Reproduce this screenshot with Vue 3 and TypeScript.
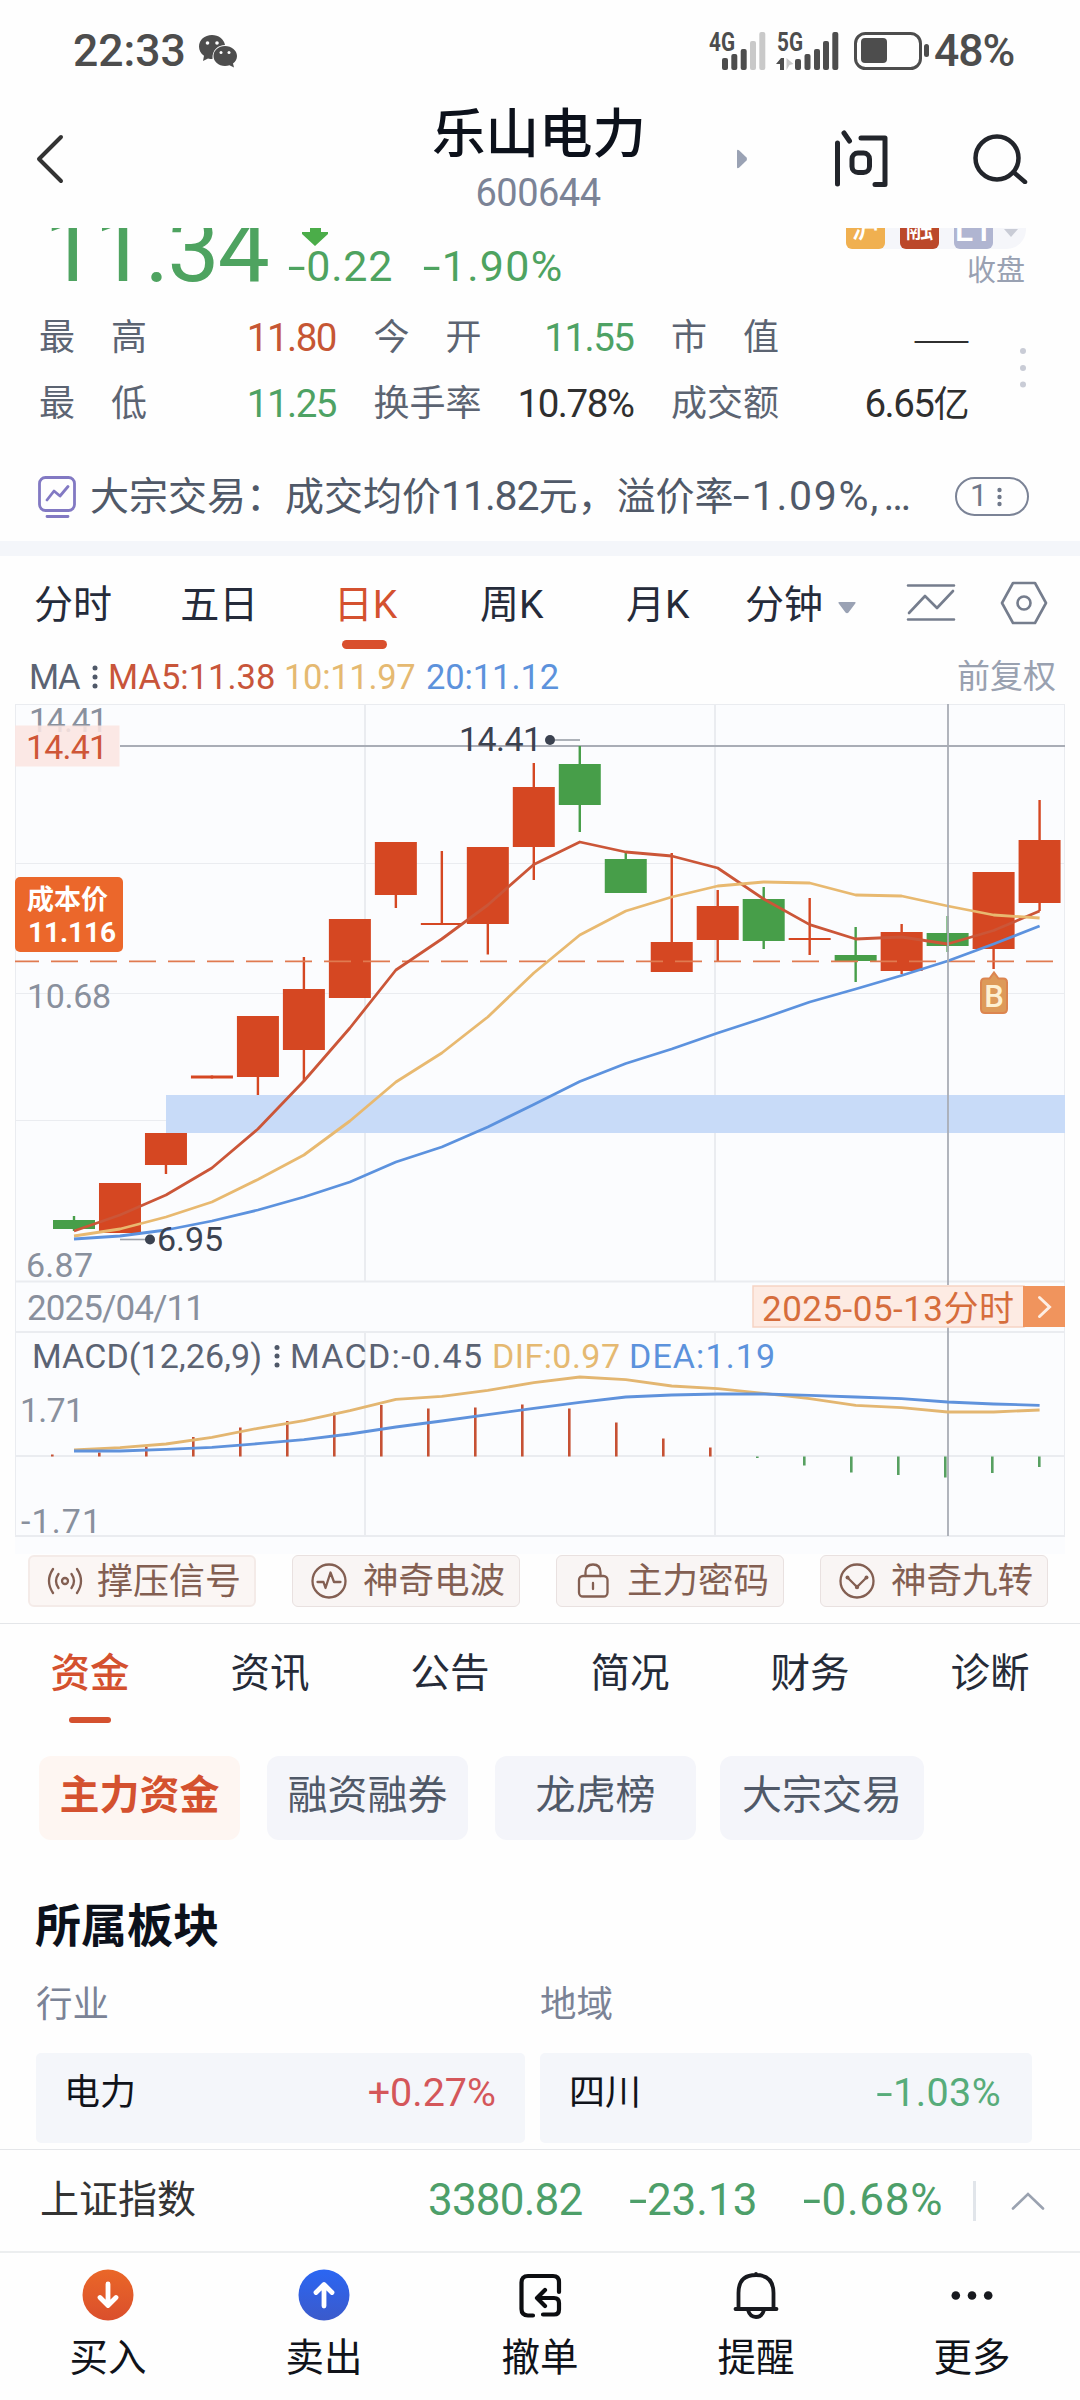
<script setup lang="ts">
interface Candle {
  up: boolean
  top: number
  bottom: number
  high: number
  low: number
}

const STEP = 45.98
const FIRST_X = 74

// [rising, body top, body bottom, high, low] in chart pixels
const rows: [boolean, number, number, number, number][] = [
  [false, 520, 529, 516, 531],
  [true, 483, 533, 483, 533],
  [true, 433, 465, 433, 474],
  [true, 375.5, 378.5, 375.5, 378.5],
  [true, 316, 377, 316, 395],
  [true, 289, 350, 257, 381.5],
  [true, 219, 298, 219, 298],
  [true, 142, 195, 142, 208],
  [true, 223, 225, 151, 224],
  [true, 147, 224, 147, 254.5],
  [true, 87, 147, 63, 180],
  [false, 64, 105, 46, 132],
  [false, 159, 193, 152, 193],
  [true, 242, 272, 153, 272],
  [true, 206, 240, 190, 261],
  [false, 199, 241, 187, 249],
  [true, 238, 240, 198, 255],
  [false, 255, 261, 227, 282],
  [true, 232, 271, 224, 274],
  [false, 233, 246, 216, 252],
  [true, 172, 249, 172, 269],
  [true, 140, 203, 100, 211],
]
const candles: Candle[] = rows.map(([up, top, bottom, high, low]) => ({ up, top, bottom, high, low }))

const ma5 = [531, 515, 495, 468, 429, 381, 328, 270, 239, 205, 164.5, 142, 152, 156, 168, 199, 224.6, 239, 237, 244, 230.5, 211]
const ma10 = [536, 529, 517, 502, 479.5, 455, 421, 382, 353, 317, 273, 235, 211, 197, 186, 182, 183, 195, 196, 206, 215, 218]
const ma20 = [539, 536, 530, 521, 510, 497, 482, 462, 447, 427, 404.5, 381.5, 363.5, 349, 333, 318, 302, 289, 275.5, 261, 244, 226]

const histogram = [2, 4, 9.5, 19.5, 29, 35.5, 44, 51.5, 48, 49, 52, 48, 34, 18, 9, -1.5, -9, -16, -18.5, -21, -16.5, -10.5]
const dif = [750, 747.7, 744, 737.3, 728.3, 720.7, 710.7, 699.3, 696.3, 690.3, 682.7, 677, 679.7, 686, 688.7, 693.3, 698.7, 705.3, 707.7, 712, 712, 710]
const dea = [751, 751, 749.3, 747.3, 743.7, 739.7, 734, 727, 721, 714.7, 708.3, 702.3, 697, 695, 694, 694, 695.3, 697, 698.7, 702, 704, 705.3]

const xAt = (i: number): number => FIRST_X + STEP * i
const line = (ys: number[]): string => ys.map((y, i) => `${xAt(i).toFixed(1)},${y}`).join(' ')

const periods = ['分时', '五日', '日K', '周K', '月K']
const sections = ['资金', '资讯', '公告', '简况', '财务', '诊断']
const chips = ['主力资金', '融资融券', '龙虎榜', '大宗交易']
</script>

<template>
  <div class="screen">
    <div class="status">
      <span class="clock">22:33</span>
      <svg class="wechat" width="40" height="34" viewBox="0 0 40 34">
        <path fill="#4d4d4d" d="M14 1C6.500 1 1 6 1 12.500c0 4 1.800 7 5 9.300L5 27l5-2.500c1.500.5 3 .5 4.500.5C14 16 20 11 27 11 26 5 20.500 1 14 1z" />
        <path fill="#4d4d4d" d="M27 12c-6.500 0-11.500 4.500-11.500 10S20.500 32 27 32c1.600 0 3-.3 4.500-.8L36 33.500l-1-4c2.500-2 4-4.500 4-7.500C39 16.500 33.500 12 27 12z" />
        <g fill="#fff"><circle cx="9.500" cy="9" r="1.800" /><circle cx="19" cy="9" r="1.800" /><circle cx="23" cy="18.500" r="1.500" /><circle cx="31" cy="18.500" r="1.500" /></g>
      </svg>
      <svg class="signals" width="222" height="52" viewBox="0 -6 222 52">
        <g class="net"><text x="0" y="19.500" textLength="26" lengthAdjust="spacingAndGlyphs">4G</text><text x="68" y="19.500" textLength="26" lengthAdjust="spacingAndGlyphs">5G</text></g>
        <g fill="#4d4d4d">
          <rect x="13" y="27" width="6" height="12" rx="2" /><rect x="22.300" y="23" width="6" height="16" rx="2" /><rect x="31.700" y="18" width="6" height="21" rx="2" />
          <rect x="86" y="28" width="6" height="11" rx="2" /><rect x="95.500" y="23" width="6" height="16" rx="2" /><rect x="105" y="18" width="6" height="21" rx="2" /><rect x="114" y="10" width="6" height="29" rx="2" /><rect x="123.300" y="1" width="6" height="38" rx="2" />
          <path d="M67 33l5-6h3v12h-4v-6z" />
          <rect x="152" y="7" width="26" height="25" rx="4" /><rect x="215" y="13" width="5" height="13" rx="2.500" />
        </g>
        <g fill="#c9c9c9"><rect x="41" y="10" width="6" height="29" rx="2" /><rect x="50.300" y="1" width="6" height="38" rx="2" /><path d="M77.500 27l7 6-4 1-3 5z" /></g>
        <rect x="146.500" y="2.500" width="65" height="35" rx="10" fill="none" stroke="#4d4d4d" stroke-width="3" />
      </svg>
      <span class="battery">48%</span>
    </div>

    <header class="header">
      <svg class="back" width="30" height="50" viewBox="0 0 30 50"><path d="M26 3L4 25l22 22" fill="none" stroke="#333" stroke-width="4" stroke-linecap="round" stroke-linejoin="round" /></svg>
      <div class="titles">
        <div class="name">乐山电力</div>
        <div class="code">600644</div>
      </div>
      <svg class="next" width="12" height="20" viewBox="0 0 12 20"><path d="M1 2q0-2 2-.8l7.500 7.400q1 1.400 0 2.800L3 18.800Q1 20 1 18z" fill="#9aa2b4" /></svg>
      <svg class="ask" width="56" height="58" viewBox="0 0 56 58" fill="none" stroke="#22252b" stroke-width="5" stroke-linecap="round" stroke-linejoin="round">
        <path d="M4.500 14v41M11 4l5.500 8M28 9h24v46.500H42" /><rect x="19" y="24" width="17.500" height="19.500" rx="6" />
      </svg>
      <svg class="search" width="56" height="52" viewBox="0 0 56 52" fill="none" stroke="#22252b" stroke-width="4.500" stroke-linecap="round"><circle cx="25" cy="26" r="21.500" /><path d="M42 40.500l11 9.500" /></svg>
    </header>

    <section class="price">
      <div class="last">11.34</div>
      <div class="change">
        <svg class="drop" width="26" height="26" viewBox="0 0 26 26"><path d="M8 0h11v12h7v2L13 26 0 14v-2h8z" fill="#4bad49" /></svg>
        <div class="delta"><span class="d1"><i>-</i>0.22</span><span class="d2"><i>-</i>1.90%</span></div>
      </div>
      <div class="marks">
        <div class="badges">
          <span class="badge sh">沪</span><span class="badge rong">融</span><span class="badge level">L1</span>
          <svg width="14" height="9" viewBox="0 0 14 9"><path d="M0 0h14L7 8z" fill="#c9ccd6" /></svg>
        </div>
        <div class="closed">收盘</div>
      </div>
    </section>

    <section class="quote">
      <div class="pair"><span>最　高</span><b class="red">11.80</b></div>
      <div class="pair"><span>今　开</span><b class="green">11.55</b></div>
      <div class="pair"><span>市　值</span><b class="dash">——</b></div>
      <div class="pair"><span>最　低</span><b class="green">11.25</b></div>
      <div class="pair"><span>换手率</span><b>10.78%</b></div>
      <div class="pair"><span>成交额</span><b>6.65<span class="unit">亿</span></b></div>
      <svg class="dots" width="8" height="42" viewBox="0 0 8 42" fill="#c9ccd6"><circle cx="4" cy="4" r="3" /><circle cx="4" cy="21" r="3" /><circle cx="4" cy="37.500" r="3" /></svg>
    </section>

    <section class="news">
      <svg width="38" height="42" viewBox="0 0 38 42" fill="none" stroke="#8279c3" stroke-width="2.800" stroke-linecap="round" stroke-linejoin="round">
        <rect x="1.500" y="1.500" width="35" height="33" rx="6" /><path d="M9 24l7-9 6 5 8-9.500M9 40.500h21" />
      </svg>
      <p class="headline">大宗交易：成交均价<span class="n1">11.82</span>元，溢价率<span class="n2"><i>-</i>1.09%</span><span class="n3">,…</span></p>
      <div class="count"><span>1</span><svg width="5" height="20" viewBox="0 0 5 20" fill="#6f788a"><circle cx="2.500" cy="3" r="2.200" /><circle cx="2.500" cy="10" r="2.200" /><circle cx="2.500" cy="17" r="2.200" /></svg></div>
    </section>

    <div class="band"></div>

    <nav class="periods">
      <div v-for="p in periods" :key="p" class="period" :class="{ on: p === '日K' }">{{ p }}</div>
      <div class="minutes">分钟<svg width="18" height="12" viewBox="0 0 18 12"><path d="M1.500 0h15q2 0 .6 1.800L10.500 10.500q-1.500 1.500-3 0L.9 1.800Q-.5 0 1.500 0z" fill="#9aa2b4" /></svg></div>
      <svg class="trend" width="50" height="40" viewBox="0 0 50 40" fill="none" stroke="#757d8d" stroke-width="2.600" stroke-linecap="round" stroke-linejoin="round"><path d="M2 2.500h46M2 36.500h46M3 30l16-17 12 12L47 8" /></svg>
      <svg class="setting" width="48" height="44" viewBox="0 0 48 44" fill="none" stroke="#757d8d" stroke-width="2.600" stroke-linejoin="round"><path d="M13 2h22l11 20-11 20H13L2 22z" /><circle cx="24" cy="22" r="6.500" /></svg>
    </nav>

    <div class="legend">
      <span class="l0">MA</span>
      <svg width="6" height="24" viewBox="0 0 6 24" fill="#4f5868"><circle cx="3" cy="3" r="2.500" /><circle cx="3" cy="12" r="2.500" /><circle cx="3" cy="21" r="2.500" /></svg>
      <span class="l5">MA5:11.38</span><span class="l10">10:11.97</span><span class="l20">20:11.12</span>
      <span class="adjust">前复权</span>
    </div>

    <svg class="chart" width="1080" height="854" viewBox="0 0 1080 854">
      <rect x="15" y="4" width="1050" height="850" fill="#fbfcfe" />
      <g class="grid">
        <path d="M15 4.500H1065M15 163.500H1065M15 293.500H1065M15 420.500H1065" />
        <path stroke-width="2" d="M15 581.500H1065M15 632H1065M15 756H1065M15 836H1065M365 4V581M715 4V581M365 632V836M715 632V836" />
        <path d="M15.500 4V836M1064.500 4V836" />
      </g>
      <text class="axis" x="29" y="32" textLength="79">14.41</text>
      <text class="axis" x="27" y="308" textLength="84">10.68</text>
      <text class="axis" x="26" y="577" textLength="67">6.87</text>
      <rect x="166" y="395" width="899" height="38" fill="#c8dbf8" />
      <path d="M120 46H1065" stroke="#a9adb6" stroke-width="1.800" />
      <rect x="15" y="25.500" width="104.500" height="41" fill="#fbe5e1" fill-opacity=".88" />
      <text class="axis hot" x="26" y="58.500" textLength="82">14.41</text>
      <g v-for="(c, i) in candles" :key="i" :fill="c.up ? '#d54722' : '#479e49'">
        <rect :x="xAt(i) - 1.2" :y="c.high" width="2.400" :height="c.low - c.high" />
        <rect :x="xAt(i) - 21" :y="c.top" width="42" :height="c.bottom - c.top" />
      </g>
      <path d="M15 261.300H1053" stroke="#e07a50" stroke-width="1.800" stroke-dasharray="27 12" stroke-dashoffset="3" />
      <g class="curve">
        <polyline :points="line(ma5)" stroke="#cb5638" />
        <polyline :points="line(ma10)" stroke="#e8b970" />
        <polyline :points="line(ma20)" stroke="#5c92de" />
      </g>
      <path d="M948 4V585M948 627V836" stroke="#a9adb6" stroke-width="1.800" />
      <g class="note">
        <text x="459" y="51" textLength="83">14.41</text><circle cx="550" cy="40" r="5" /><path d="M555 40H580" />
        <path d="M120 539.500H146" /><circle cx="150" cy="539.500" r="5" /><text x="157" y="550.500" textLength="66">6.95</text>
      </g>
      <rect x="15" y="177" width="108" height="75" rx="5" fill="#eb672b" />
      <text class="cost" x="27" y="209" textLength="81">成本价</text>
      <text class="cost num" x="28" y="242" textLength="88">11.116</text>
      <path d="M985 278.500h4.500l4.500-6 4.500 6h4.500q4 0 4 4v26.500q0 4-4 4h-18q-4 0-4-4v-26.500q0-4 4-4z" fill="#dd9a59" stroke="#dc8550" stroke-width="2" />
      <text class="buy" x="994" y="307">B</text>

      <text class="axis date" x="27" y="620" textLength="178">2025/04/11</text>
      <rect x="753" y="586" width="271" height="41" fill="#fdebe3" stroke="#f6d3c4" stroke-width="1.500" />
      <rect x="1023" y="586" width="42" height="41" fill="#f0945d" />
      <path d="M1039.500 597.500l10 9.500-10 9.500" fill="none" stroke="#fdeee4" stroke-width="3" stroke-linecap="round" />
      <text class="jump" x="762" y="621" textLength="252">2025-05-13分时</text>

      <text class="macd" x="32" y="668" textLength="230">MACD(12,26,9)</text>
      <g fill="#4f5868"><circle cx="277" cy="647.500" r="2.500" /><circle cx="277" cy="656" r="2.500" /><circle cx="277" cy="665" r="2.500" /></g>
      <text class="macd" x="290" y="668" textLength="192">MACD:-0.45</text>
      <text class="macd dif" x="492" y="668" textLength="128">DIF:0.97</text>
      <text class="macd dea" x="629" y="668" textLength="146">DEA:1.19</text>
      <text class="axis" x="20" y="721.500" textLength="64">1.71</text>
      <text class="axis" x="21" y="833" textLength="80">-1.71</text>
      <rect v-for="(h, i) in histogram" :key="'h' + i" :x="51 + 47 * i" :y="h > 0 ? 756.5 - h : 756.5" width="2.600" :height="Math.abs(h)" :fill="h > 0 ? '#c65134' : '#57a061'" />
      <g class="curve">
        <polyline :points="line(dif)" stroke="#e3b671" />
        <polyline :points="line(dea)" stroke="#5f92dc" />
      </g>
    </svg>

    <div class="tools">
      <div class="tool soft">
        <svg width="36" height="34" viewBox="0 0 36 34"><circle cx="18" cy="17" r="3" /><path d="M11.500 10q-5 7 0 14M24.500 10q5 7 0 14M6 5q-8 12 0 24M30 5q8 12 0 24" /></svg><span>撑压信号</span>
      </div>
      <div class="tool">
        <svg width="36" height="36" viewBox="0 0 36 36"><circle cx="18" cy="18" r="16.500" /><path d="M6.500 19h6l2 6 5-15.500 3.500 9.500h6.500" /></svg><span>神奇电波</span>
      </div>
      <div class="tool">
        <svg width="36" height="36" viewBox="0 0 36 36"><rect x="4" y="13" width="28.500" height="20.500" rx="4" /><path d="M10.500 13V9.500q0-8 7.500-8t7.500 8V13M18 20v6" /></svg><span>主力密码</span>
      </div>
      <div class="tool">
        <svg width="36" height="36" viewBox="0 0 36 36"><circle cx="18" cy="18" r="16.500" /><path d="M8.500 14.500L18 24l9.500-9.500" /><g class="knot"><circle cx="8.500" cy="14.500" r="2" /><circle cx="18" cy="24" r="2.200" /><circle cx="27.500" cy="14.500" r="2" /></g></svg><span>神奇九转</span>
      </div>
    </div>

    <nav class="sections">
      <div v-for="s in sections" :key="s" class="section" :class="{ on: s === '资金' }">{{ s }}</div>
    </nav>

    <div class="chips">
      <div v-for="c in chips" :key="c" class="chip" :class="{ on: c === '主力资金', wide: c === '大宗交易' }">{{ c }}</div>
    </div>

    <h2 class="heading">所属板块</h2>
    <div class="boards">
      <div class="board"><div class="kind">行业</div><div class="card"><span>电力</span><em class="rise">+0.27%</em></div></div>
      <div class="board second"><div class="kind">地域</div><div class="card"><span>四川</span><em class="fall"><i>-</i>1.03%</em></div></div>
    </div>

    <div class="index">
      <span class="index-name">上证指数</span>
      <span class="i1">3380.82</span><span class="i2"><i>-</i>23.13</span><span class="i3"><i>-</i>0.68%</span>
      <span class="rule"></span>
      <svg width="34" height="20" viewBox="0 0 34 20"><path d="M2 17.500L17 3l15 14.500" fill="none" stroke="#9aa2b0" stroke-width="2.600" stroke-linecap="round" /></svg>
    </div>

    <nav class="actions">
      <div class="action">
        <svg width="52" height="52" viewBox="0 0 52 52"><defs><linearGradient id="buy" x1="0" y1="0" x2="0" y2="1"><stop offset="0" stop-color="#ea6728" /><stop offset="1" stop-color="#da4f2c" /></linearGradient></defs><circle cx="26" cy="26" r="25.500" fill="url(#buy)" /><path d="M26 15v20M18 28.500l8 8 8-8" fill="none" stroke="#fff" stroke-width="4.800" stroke-linecap="round" stroke-linejoin="round" /></svg>
        买入
      </div>
      <div class="action">
        <svg width="52" height="52" viewBox="0 0 52 52"><defs><linearGradient id="sell" x1="0" y1="0" x2="0" y2="1"><stop offset="0" stop-color="#2b66f3" /><stop offset="1" stop-color="#3b5acb" /></linearGradient></defs><circle cx="26" cy="26" r="25.500" fill="url(#sell)" /><path d="M26 37V17M18 23.500l8-8 8 8" fill="none" stroke="#fff" stroke-width="4.800" stroke-linecap="round" stroke-linejoin="round" /></svg>
        卖出
      </div>
      <div class="action">
        <svg width="52" height="52" viewBox="0 0 52 52" fill="none" stroke="#0c0d10" stroke-width="4.200" stroke-linecap="round" stroke-linejoin="round"><path d="M19 46.500h-5q-6.500 0-6.500-6.500V13.500q0-6.500 6.500-6.500h25q6 0 6 6v10M31 21l-8 8 8 8M24 29h16q5 0 5 5v6.500q0 5-5 5H29" /></svg>
        撤单
      </div>
      <div class="action">
        <svg width="52" height="52" viewBox="0 0 52 52" fill="none" stroke="#17191e" stroke-width="3.800" stroke-linecap="round"><path d="M5.500 40h41M8.500 40V24q0-18 17.500-18t17.500 18v16M26 6V5M18 41q2 7 8 7t8-7" /></svg>
        提醒
      </div>
      <div class="action">
        <svg width="52" height="52" viewBox="0 0 52 52" fill="#17191e"><circle cx="9.800" cy="26.500" r="4.300" /><circle cx="26" cy="26.500" r="4.300" /><circle cx="42.200" cy="26.500" r="4.300" /></svg>
        更多
      </div>
    </nav>
  </div>
</template>

<style>
body {
  background: #fff;
}
</style>

<style scoped>
.screen {
  width: 1080px;
  height: 2400px;
  overflow: hidden;
  background: #fefefe;
  color: #252b38;
  font-family: Roboto, "Noto Sans CJK SC", sans-serif;
  line-height: 1.17;
}
.screen * {
  box-sizing: border-box;
}
/* wide, light minus sign in front of negative values */
i {
  display: inline-block;
  margin: 0 .07em 0 .06em;
  font-style: normal;
  transform: scaleX(1.5);
}
svg {
  display: block;
  flex: none;
}
.status {
  display: flex;
  align-items: center;
  height: 102px;
  padding-left: 73px;
  color: #4d4d4d;
  font-size: 44.500px;
  font-weight: 500;
}
.clock {
  width: 125px;
}
.signals {
  margin-left: 471px;
}
.net text {
  fill: #4d4d4d;
  font: 700 25px Roboto, sans-serif;
}
.battery {
  margin-left: 3px;
  letter-spacing: -1px;
}
.header {
  display: flex;
  height: 126px;
  padding-left: 35px;
}
.back {
  margin-top: 32px;
}
.titles {
  width: 220px;
  margin-left: 363px;
  text-align: center;
}
.name {
  height: 62px;
  padding-left: 2px;
  line-height: 65px;
  color: #0c111b;
  font-size: 53.500px;
  font-weight: 500;
  white-space: nowrap;
}
.code {
  margin-top: 9px;
  line-height: 40px;
  color: #7b8396;
  font-size: 38px;
  letter-spacing: -.5px;
}
.next {
  margin: 47px 0 0 88px;
}
.ask {
  margin: 27px 0 0 85px;
}
.search {
  margin: 30px 0 0 83px;
}
.price {
  display: flex;
  height: 72px;
  overflow: hidden;
  color: #4ea360;
}
.last {
  width: 244px;
  margin: -25px 0 0 44px;
  font-size: 92.600px;
  letter-spacing: -1.700px;
  line-height: 93px;
}
.change {
  width: 290px;
}
.drop {
  margin: -8px 0 0 14px;
}
.delta {
  display: flex;
  font-size: 43px;
  line-height: 41px;
}
.d1 {
  width: 135px;
  letter-spacing: .8px;
}
.d2 {
  letter-spacing: 1.300px;
}
.marks {
  margin-left: 268px;
}
.badges {
  display: flex;
  align-items: center;
  width: 180px;
  height: 39px;
  margin-top: -18px;
  border-radius: 8px 20px 20px 8px;
  background: #f5f6fa;
}
.badge {
  width: 39px;
  height: 39px;
  margin-right: 15px;
  border-radius: 6px;
  color: #fff;
  font-size: 28px;
  font-weight: 500;
  line-height: 38px;
  text-align: center;
}
.badges svg {
  margin: 8px 0 0 -4px;
}
.sh {
  background: #f0b050;
}
.rong {
  background: #bb482a;
}
.level {
  background: #b0b5d1;
  font-size: 34px;
}
.closed {
  width: 179px;
  margin-top: 4px;
  color: #99a1b2;
  font-size: 29px;
  line-height: 37px;
  text-align: right;
}
.quote {
  display: grid;
  position: relative;
  grid-template-columns: 297px 260px 297px;
  grid-auto-rows: 66px;
  column-gap: 37.500px;
  height: 152px;
  padding: 5px 0 0 39px;
  font-size: 36px;
}
.pair {
  display: flex;
  align-items: center;
  justify-content: space-between;
  color: #5c6472;
}
.pair b {
  color: #2f2f2f;
  font-size: 38.500px;
  font-weight: 400;
  letter-spacing: -1.500px;
}
.pair .unit {
  color: #2f2f2f;
  font-size: 36px;
}
.pair .red {
  color: #c65634;
}
.pair .green {
  color: #4ea264;
}
.pair .dash {
  margin-right: -2px;
  font-family: "Noto Sans CJK SC", sans-serif;
  font-size: 34px;
  letter-spacing: 0;
  white-space: nowrap;
}
.dots {
  position: absolute;
  left: 1019px;
  top: 47px;
}
.news {
  display: flex;
  align-items: center;
  height: 89px;
  padding-left: 38px;
  color: #505968;
}
.headline {
  width: 829px;
  margin: 0 0 0 14px;
  font-size: 39px;
  line-height: 50px;
  white-space: nowrap;
}
.headline span {
  font-size: 41px;
}
.n1 {
  letter-spacing: -1.100px;
}
.n2 {
  letter-spacing: 1.700px;
}
.n3 {
  letter-spacing: 5px;
}
.count {
  display: flex;
  align-items: center;
  width: 74px;
  height: 39px;
  margin-left: 36px;
  padding-left: 13px;
  border: 2.500px solid #7b8396;
  border-radius: 20px;
  color: #6f788a;
  font-size: 31px;
}
.count svg {
  margin-left: 10px;
}
.band {
  height: 15px;
  background: #f4f6fa;
}
.periods {
  display: flex;
  height: 94px;
  color: #252b3a;
  font-size: 39px;
  line-height: 98px;
}
.period {
  position: relative;
  width: 146.200px;
  text-align: center;
}
.on {
  color: #d4512f;
}
.period.on::after {
  position: absolute;
  bottom: 1px;
  left: 50px;
  width: 45px;
  height: 9px;
  border-radius: 5px;
  background: #d94f2d;
  content: "";
}
.minutes {
  display: flex;
  margin-left: 14px;
}
.minutes svg {
  margin: 46px 0 0 15px;
}
.trend {
  margin: 27px 0 0 50px;
}
.setting {
  margin: 25px 0 0 44px;
}
.legend {
  display: flex;
  align-items: center;
  height: 50px;
  padding: 4px 24px 0 29px;
  color: #5b6373;
  font-size: 34.500px;
}
.l0 {
  width: 63px;
  letter-spacing: -1.500px;
}
.l5 {
  width: 176px;
  margin-left: 10px;
  color: #c8553a;
}
.l10 {
  width: 142px;
  color: #e5b971;
  letter-spacing: -.3px;
}
.l20 {
  color: #5c92dc;
  letter-spacing: -.1px;
}
.adjust {
  margin-left: auto;
  color: #99a1b0;
  font-size: 33px;
}
.chart text {
  font-family: Roboto, "Noto Sans CJK SC", sans-serif;
  font-size: 34px;
}
.grid path {
  fill: none;
  stroke: #eaecf0;
}
.chart .axis {
  fill: #89909d;
}
.chart .date {
  font-size: 35px;
}
.chart .hot {
  fill: #cf5637;
}
.curve polyline {
  fill: none;
  stroke-width: 2.800;
  stroke-linejoin: round;
}
.note {
  fill: #3b4250;
}
.note path {
  stroke: #9a9fa8;
  stroke-width: 1.600;
}
.chart .cost {
  fill: #fff;
  font-size: 27px;
  font-weight: 700;
}
.chart .cost.num {
  font-size: 28px;
}
.chart .buy {
  fill: #fdf0d2;
  font-size: 31px;
  font-weight: 500;
  text-anchor: middle;
}
.chart .jump {
  fill: #d66d3c;
  font-size: 35px;
}
.chart .macd {
  fill: #5b6373;
}
.chart .macd.dif {
  fill: #e5b971;
}
.chart .macd.dea {
  fill: #5c92dc;
}
.tools {
  display: flex;
  gap: 36px;
  height: 69px;
  padding: 1px 0 0 28px;
}
.tool {
  display: flex;
  align-items: center;
  justify-content: space-between;
  width: 228px;
  height: 52px;
  padding: 0 14px 0 18px;
  border: 1px solid #e9e1e0;
  border-radius: 6px;
  background: #f9f5f4;
  color: #835f52;
  font-size: 35.500px;
}
.tool span {
  padding-top: 2px;
}
.soft {
  padding: 0 13px 0 17px;
  border: 2px solid #f4ebe8;
  background: #fbf6f4;
  font-size: 36px;
}
.tool svg {
  fill: none;
  stroke: #835f52;
  stroke-width: 2.300;
  stroke-linecap: round;
  stroke-linejoin: round;
}
.tool .knot {
  fill: #835f52;
  stroke: none;
}
.sections {
  display: flex;
  height: 133px;
  border-top: 1px solid #e4e6e9;
  font-size: 39.500px;
  line-height: 99px;
}
.section {
  position: relative;
  width: 180px;
  text-align: center;
}
.section.on {
  font-weight: 500;
}
.section.on::after {
  position: absolute;
  top: 93px;
  left: 69px;
  width: 42px;
  height: 6px;
  border-radius: 3px;
  background: #d4512f;
  content: "";
}
.chips {
  display: flex;
  gap: 27px;
  padding-left: 39px;
}
.chip {
  width: 201px;
  height: 84px;
  border-radius: 12px;
  background: #f4f5fa;
  color: #505968;
  font-size: 40px;
  line-height: 80px;
  text-align: center;
}
.chip.on {
  background: #fef6f2;
  color: #d4512f;
  font-weight: 700;
}
.chip.wide {
  width: 204px;
  margin-left: -3px;
}
.heading {
  height: 135px;
  margin: 0;
  padding: 56px 0 0 35px;
  color: #0c111b;
  font-size: 46px;
  font-weight: 700;
  line-height: 60px;
}
.boards {
  display: flex;
  gap: 15px;
  height: 174px;
  padding-left: 36px;
}
.board {
  width: 489px;
}
.second {
  width: 492px;
}
.second .card {
  padding: 0 31px 0 29px;
}
.kind {
  height: 78px;
  color: #7b8396;
  font-size: 36.500px;
  line-height: 59px;
}
.card {
  display: flex;
  justify-content: space-between;
  height: 90px;
  padding: 0 29px 0 28px;
  border-radius: 5px;
  background: #f4f6fa;
  color: #10131a;
  font-size: 36px;
  line-height: 80px;
}
.card em {
  font-size: 39.500px;
  font-style: normal;
}
.rise {
  color: #d4575a;
}
.fall {
  color: #57ac7a;
  letter-spacing: .4px;
}
.index {
  display: flex;
  align-items: center;
  height: 102px;
  padding-top: 1px;
  border-top: 1px solid #e4e6e9;
  color: #4d9f69;
  font-size: 44px;
}
.index-name {
  width: 428px;
  padding-left: 40px;
  color: #333;
  font-size: 39px;
}
.i1 {
  width: 201px;
  letter-spacing: -.8px;
}
.i2 {
  width: 174px;
  letter-spacing: 0;
}
.i3 {
  width: 170px;
  letter-spacing: .7px;
}
.rule {
  width: 3px;
  height: 40px;
  background: #e1e5ea;
}
.index svg {
  margin-left: 35px;
}
.actions {
  display: flex;
  height: 149px;
  padding-top: 16px;
  border-top: 2px solid #eceeef;
  color: #10131a;
  font-size: 38.500px;
}
.action {
  display: flex;
  flex: 1;
  flex-direction: column;
  align-items: center;
  gap: 12px;
  line-height: 50px;
}
</style>
